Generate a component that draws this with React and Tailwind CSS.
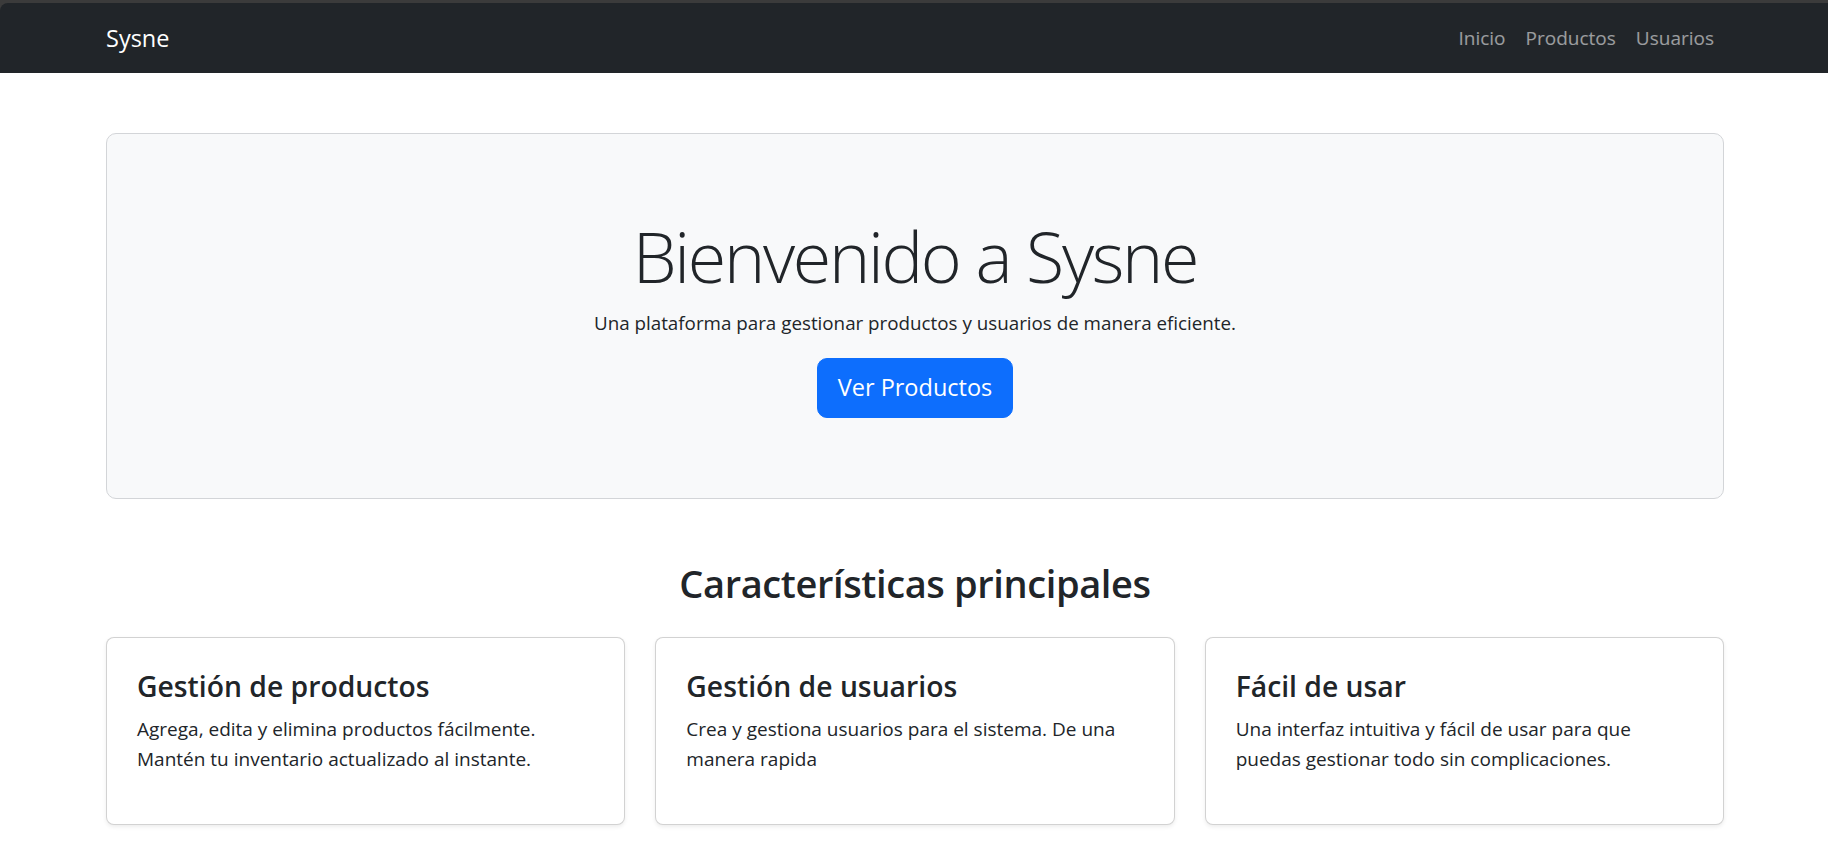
const features = [
  {
    title: 'Gestión de productos',
    lines: ['Agrega, edita y elimina productos fácilmente.', 'Mantén tu inventario actualizado al instante.'],
  },
  {
    title: 'Gestión de usuarios',
    lines: ['Crea y gestiona usuarios para el sistema. De una', 'manera rapida'],
  },
  {
    title: 'Fácil de usar',
    lines: ['Una interfaz intuitiva y fácil de usar para que', 'puedas gestionar todo sin complicaciones.'],
  },
];

const navLinks = ['Inicio', 'Productos', 'Usuarios'];

export default function App() {
  return (
    <div className="min-h-screen bg-white font-['Open_Sans',_'Noto_Sans',_sans-serif] text-[#212529]">
      <div className="bg-[#3b3b3b] pt-[3px]">
        <nav className="h-[70px] rounded-tl-[8px] bg-[#212529]">
          <div className="mx-auto flex h-full w-[1650px] items-center justify-between pl-[17px] pr-[15px]">
            <a href="#" className="text-[23.5px] leading-[37px] text-white">
              Sysne
            </a>
            <ul className="flex">
              {navLinks.map((link) => (
                <li key={link}>
                  <a href="#" className="block px-[10px] py-[10px] text-[19px] leading-[30px] text-white/55">
                    {link}
                  </a>
                </li>
              ))}
            </ul>
          </div>
        </nav>
      </div>

      <main className="mx-auto w-[1650px] pl-[17px] pr-[15px]">
        <section className="mt-[60px] rounded-[10px] border border-[#d3d5d8] bg-[#f8f9fa] px-[60px] pt-[80px] pb-[60px] text-center">
          <h1 className="mb-[10px] text-[70px] font-light leading-[84px] tracking-[-0.033em]">
            Bienvenido a Sysne
          </h1>
          <p className="mb-[20px] text-[18.8px] leading-[30px]">
            Una plataforma para gestionar productos y usuarios de manera eficiente.
          </p>
          <p className="mb-[20px]">
            <a
              href="#"
              className="inline-block rounded-[10px] border border-[#0d6efd] bg-[#0d6efd] px-[20px] py-[10px] text-[23.5px] leading-[37.5px] text-white"
            >
              Ver Productos
            </a>
          </p>
        </section>

        <h2 className="mt-[60px] mb-[30px] text-center text-[38px] font-semibold leading-[48px] tracking-[-0.01em]">
          Características principales
        </h2>

        <div className="grid grid-cols-3 gap-[30px]">
          {features.map((f) => (
            <div
              key={f.title}
              className="rounded-[8px] border border-black/[0.175] bg-white p-[30px] shadow-[0_2px_4px_rgba(0,0,0,0.075)]"
            >
              <h4 className="mb-[10px] text-[28.3px] font-semibold leading-[36px]">{f.title}</h4>
              <p className="mb-[20px] text-[19px] leading-[30px]">
                {f.lines.map((line, i) => (
                  <span key={i} className="block whitespace-nowrap">
                    {line}
                  </span>
                ))}
              </p>
            </div>
          ))}
        </div>
      </main>
    </div>
  );
}
